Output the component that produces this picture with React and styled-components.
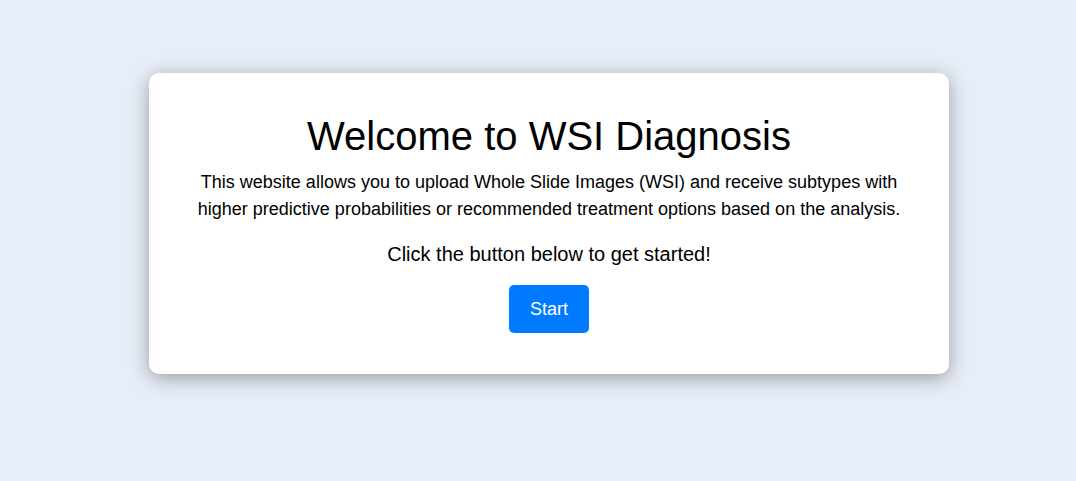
import React from "react";
import styled, { createGlobalStyle } from "styled-components";

const Global = createGlobalStyle`
  html, body { margin: 0; padding: 0; }
  body {
    background: #e8eef8;
    font-family: "Liberation Sans", Arial, sans-serif;
    color: #000;
  }
`;

const Page = styled.div`
  min-height: 481px;
  display: flex;
  justify-content: center;
  align-items: flex-start;
  padding: 73px 0 0 22px;
  box-sizing: border-box;
`;

const Card = styled.div`
  width: 800px;
  box-sizing: border-box;
  background: #fff;
  border-radius: 10px;
  box-shadow: 0 4px 20px rgba(0, 0, 0, 0.35);
  padding: 40px 40px 41px;
  display: flex;
  flex-direction: column;
  align-items: center;
  text-align: center;
`;

const Title = styled.h1`
  margin: 0 0 10px;
  font-size: 40px;
  font-weight: 400;
  line-height: 46px;
`;

const Text = styled.p`
  margin: 0 0 ${(p) => p.$gap}px;
  font-size: ${(p) => p.$size}px;
  line-height: ${(p) => p.$lh}px;
`;

const Button = styled.button`
  height: 48px;
  padding: 0 21px;
  border: none;
  border-radius: 5px;
  background: #007bff;
  color: #fff;
  font-family: "Liberation Sans", Arial, sans-serif;
  font-size: 18px;
  cursor: pointer;
`;

export default function App() {
  return (
    <>
      <Global />
      <Page>
        <Card>
          <Title>Welcome to WSI Diagnosis</Title>
          <Text $size={18} $lh={27} $gap={20}>
            This website allows you to upload Whole Slide Images (WSI) and receive subtypes with
            higher predictive probabilities or recommended treatment options based on the analysis.
          </Text>
          <Text $size={20} $lh={23} $gap={19}>
            Click the button below to get started!
          </Text>
          <Button>Start</Button>
        </Card>
      </Page>
    </>
  );
}
